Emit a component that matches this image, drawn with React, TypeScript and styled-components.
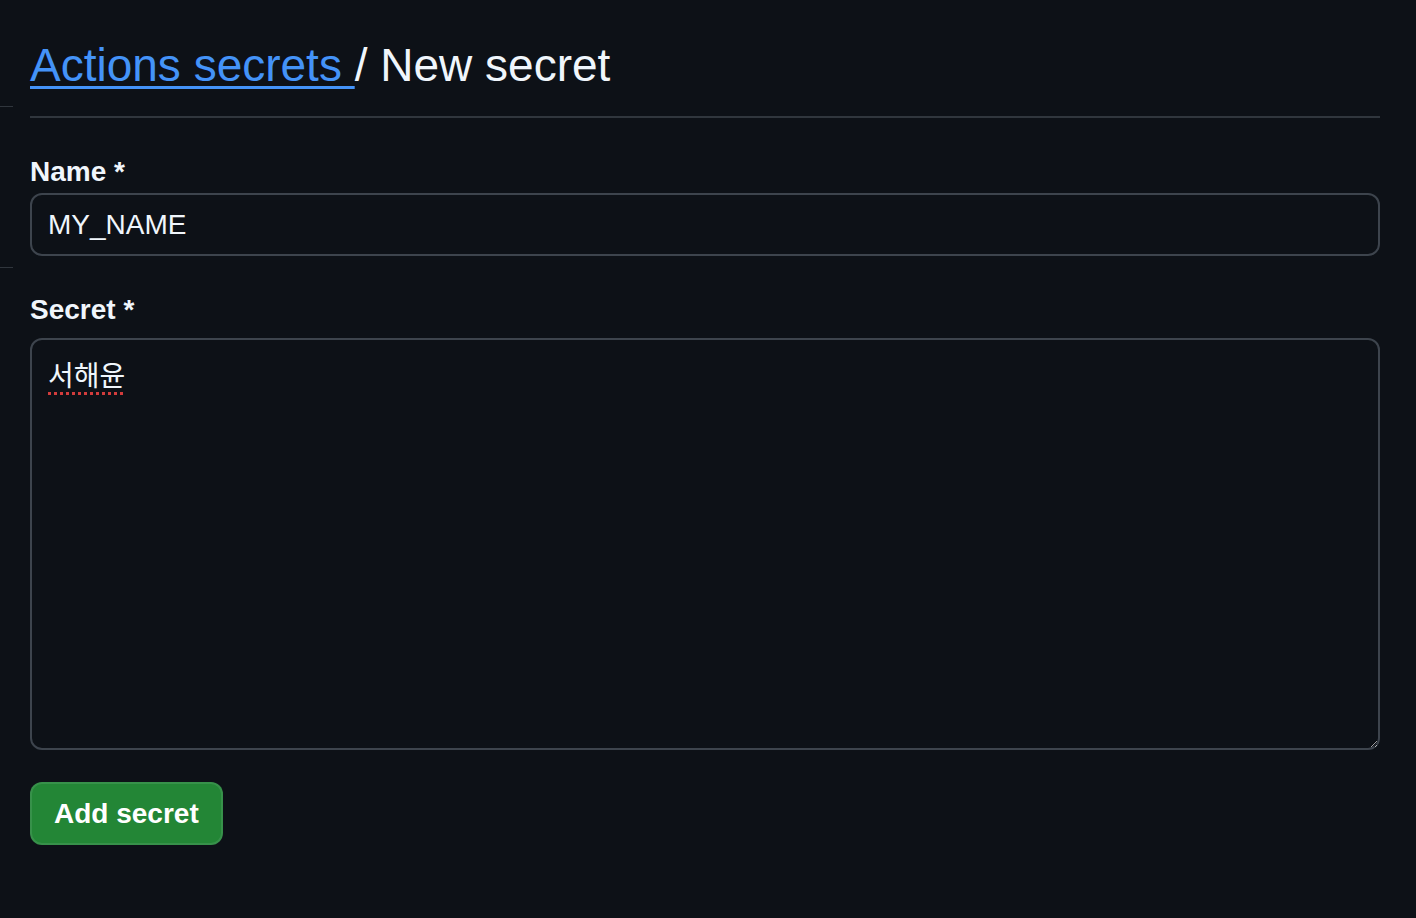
import React from "react";
import styled, { createGlobalStyle } from "styled-components";

const GlobalStyle = createGlobalStyle`
  html, body {
    margin: 0;
    padding: 0;
    background: #0d1117;
  }
  body {
    font-family: "Liberation Sans", Arial, "Noto Sans CJK KR", sans-serif;
    color: #f0f6fc;
  }
`;

export default function App() {
  return (
    <>
      <GlobalStyle />
      <Page>
        <SideNav>
          <NavItem size={107} />
          <NavItem size={161} />
        </SideNav>
        <Main>
          <Subhead>
            <Heading>
              <Crumb href="#">Actions secrets </Crumb>/ New secret
            </Heading>
          </Subhead>
          <FormGroup>
            <Label htmlFor="secret-name">Name *</Label>
            <TextInput id="secret-name" defaultValue="MY_NAME" />
          </FormGroup>
          <FormGroup>
            <Label htmlFor="secret-value">Secret *</Label>
            <AreaWrap>
              <TextArea id="secret-value" defaultValue="서해윤" spellCheck={false} />
              <SpellMark aria-hidden>서해윤</SpellMark>
            </AreaWrap>
          </FormGroup>
          <SubmitButton type="button">Add secret</SubmitButton>
        </Main>
      </Page>
    </>
  );
}

const Page = styled.div`
  display: flex;
  min-height: 918px;
  background: #0d1117;
`;

const SideNav = styled.div`
  width: 13px;
  display: flex;
  flex-direction: column;
`;

const NavItem = styled.div<{ size: number }>`
  height: ${props => props.size}px;
  box-sizing: border-box;
  border-bottom: 1px solid #30363d;
`;

const Main = styled.div`
  width: 1350px;
  margin-left: 17px;
  padding-top: 30px;
`;

const Subhead = styled.div`
  padding-bottom: 16px;
  border-bottom: 2px solid #30363d;
  margin-bottom: 32px;
`;

const Heading = styled.h2`
  margin: 0;
  font-size: 46px;
  font-weight: 400;
  line-height: 70px;
  color: #f0f6fc;
`;

const Crumb = styled.a`
  color: #4493f8;
  text-decoration: underline;
  text-decoration-thickness: 3px;
  text-underline-offset: 5px;
`;

const FormGroup = styled.div`
  display: flex;
  flex-direction: column;
  margin-bottom: 32px;
`;

const Label = styled.label`
  font-size: 28px;
  font-weight: 700;
  line-height: 43px;
  color: #f0f6fc;
`;

const TextInput = styled.input`
  box-sizing: border-box;
  height: 63px;
  width: 100%;
  padding: 0 16px;
  font-family: "Liberation Sans", Arial, sans-serif;
  font-size: 28px;
  color: #f0f6fc;
  background: #0d1117;
  border: 2px solid #3d444d;
  border-radius: 12px;
  outline: none;
`;

const AreaWrap = styled.div`
  position: relative;
  height: 412px;
  margin-top: 7px;
`;

const TextArea = styled.textarea`
  box-sizing: border-box;
  display: block;
  width: 100%;
  height: 100%;
  padding: 22px 16px;
  font-family: "Liberation Sans", Arial, "Noto Sans CJK KR", sans-serif;
  font-size: 28px;
  line-height: 30px;
  color: #f0f6fc;
  background: #0d1117;
  border: 2px solid #3d444d;
  border-radius: 12px;
  outline: none;
  resize: vertical;
`;

const SpellMark = styled.span`
  position: absolute;
  left: 18px;
  top: 24px;
  font-family: "Liberation Sans", Arial, "Noto Sans CJK KR", sans-serif;
  font-size: 28px;
  line-height: 30px;
  color: transparent;
  text-decoration: underline dotted #d23c3c;
  text-decoration-thickness: 3px;
  text-underline-offset: 6px;
  pointer-events: none;
`;

const SubmitButton = styled.button`
  align-self: flex-start;
  height: 63px;
  padding: 0 22px;
  font-family: "Liberation Sans", Arial, sans-serif;
  font-size: 28px;
  font-weight: 700;
  color: #ffffff;
  background: #238636;
  border: 2px solid rgba(240, 246, 252, 0.1);
  border-radius: 12px;
  cursor: pointer;
`;
